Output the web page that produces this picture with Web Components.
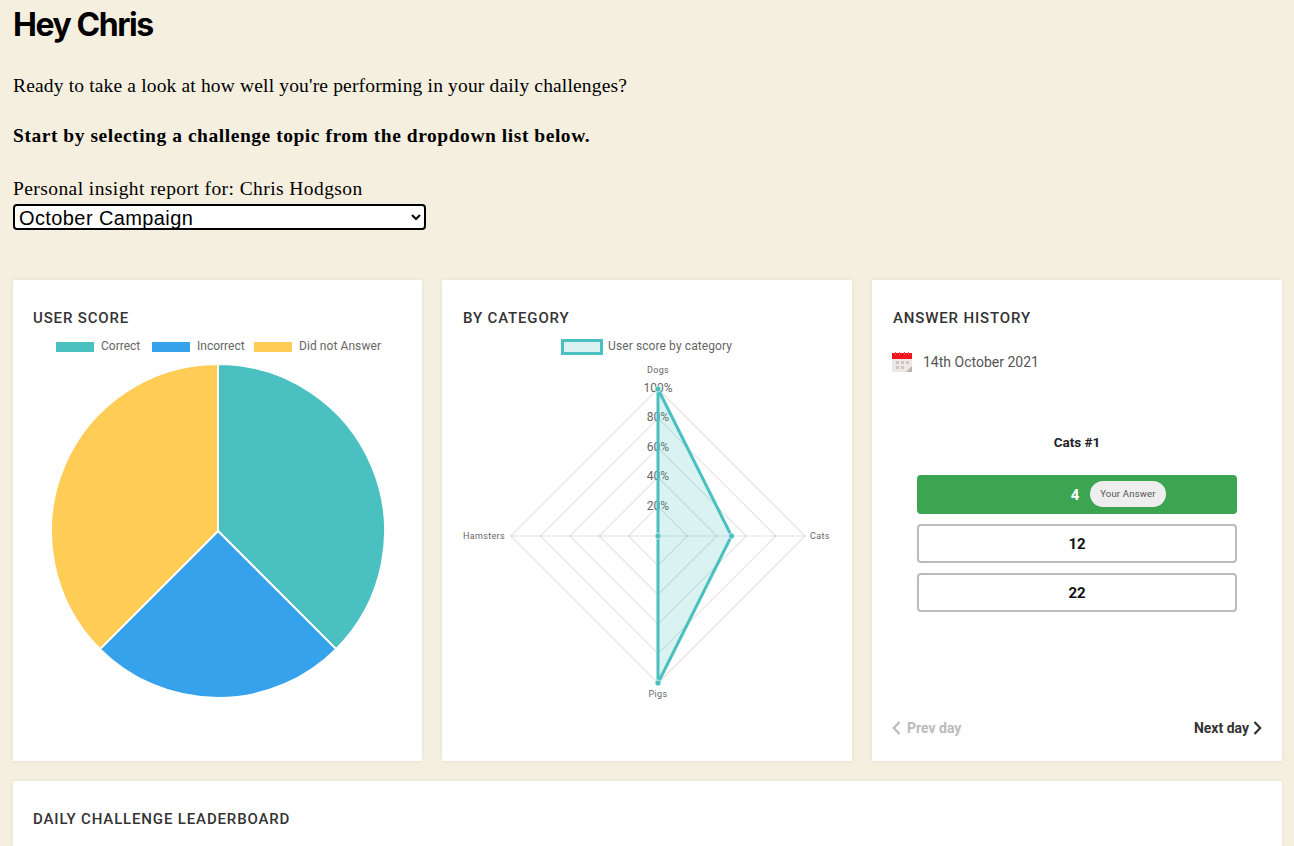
<!DOCTYPE html>
<html>
<head>
<meta charset="utf-8">
<title>Personal insight report</title>
<style>
    html, body {
        margin: 0;
        padding: 0;
        height: 846px;
        overflow: hidden;
        background: #f5efe0;
    }
</style>
</head>
<body>
<insight-page>
    <insight-intro name="Chris" fullname="Chris Hodgson"></insight-intro>
    <insight-grid>
        <insight-card heading="User score"><score-pie></score-pie></insight-card>
        <insight-card heading="By category" style="--title-left: 21px"><category-radar></category-radar></insight-card>
        <insight-card heading="Answer history" style="--title-left: 21px"><answer-history></answer-history></insight-card>
    </insight-grid>
    <insight-card class="wide" heading="Daily challenge leaderboard"></insight-card>
</insight-page>

<script>
class InsightPage extends HTMLElement {
    constructor() {
        super();
        this.attachShadow({mode: 'open'}).innerHTML = `
        <style>
            :host {
                display: flex;
                flex-direction: column;
                gap: 20px;
                padding: 0 12px 0 13px;
            }
            ::slotted(.wide) {
                height: 65px;
            }
        </style>
        <slot></slot>
        `;
    }
}

class InsightIntro extends HTMLElement {
    constructor() {
        super();
        const name = this.getAttribute('name');
        const fullname = this.getAttribute('fullname');
        this.attachShadow({mode: 'open'}).innerHTML = `
        <style>
            :host {
                display: block;
                color: #000;
                font-family: "Liberation Serif", serif;
                font-size: 19.5px;
                height: 260px;
            }
            h1 {
                margin: 0;
                padding-top: 6px;
                font: 700 32px/38px Inter, sans-serif;
                letter-spacing: -1.45px;
            }
            p {
                margin: 0;
                line-height: 23px;
            }
            .ready { margin-top: 30px; letter-spacing: 0.16px; }
            .start { margin-top: 27px; font-weight: bold; letter-spacing: 0.54px; }
            .report { margin-top: 30px; letter-spacing: 0.42px; }
            select {
                display: block;
                box-sizing: border-box;
                width: 413px;
                height: 26px;
                margin-top: 4px;
                padding: 0;
                background: #fff;
                color: #000;
                border: 2px solid #000;
                border-radius: 4px;
                font: 20px "Liberation Sans", sans-serif;
                letter-spacing: 0.4px;
            }
        </style>
        <h1>Hey ${name}</h1>
        <p class="ready">Ready to take a look at how well you're performing in your daily challenges?</p>
        <p class="start">Start by selecting a challenge topic from the dropdown list below.</p>
        <p class="report">Personal insight report for: ${fullname}</p>
        <select><option>October Campaign</option></select>
        `;
    }
}

class InsightGrid extends HTMLElement {
    constructor() {
        super();
        this.attachShadow({mode: 'open'}).innerHTML = `
        <style>
            :host {
                display: grid;
                grid-template-columns: 409px 410px 410px;
                gap: 20px;
                height: 481px;
            }
        </style>
        <slot></slot>
        `;
    }
}

class InsightCard extends HTMLElement {
    constructor() {
        super();
        this.attachShadow({mode: 'open'}).innerHTML = `
        <style>
            :host {
                display: flex;
                flex-direction: column;
                box-sizing: border-box;
                min-width: 0;
                background: #fff;
                box-shadow: 0 0 4px rgba(0, 0, 0, 0.08);
            }
            h2 {
                margin: 0;
                padding: 30px 20px 0 var(--title-left, 20px);
                font: 500 15px/17px Roboto, sans-serif;
                letter-spacing: 0.85px;
                text-transform: uppercase;
                color: #333;
            }
            .body {
                flex: 1;
                display: flex;
                flex-direction: column;
                min-height: 0;
            }
        </style>
        <h2>${this.getAttribute('heading')}</h2>
        <div class="body"><slot></slot></div>
        `;
    }
}

class ScorePie extends HTMLElement {
    constructor() {
        super();
        this.attachShadow({mode: 'open'}).innerHTML = `
        <style>
            :host { display: block; }
            svg { display: block; }
            text { font: 12px Roboto, sans-serif; fill: #666; }
        </style>
        <svg width="409" height="434" viewBox="13 327 409 434">
            <rect x="56" y="342" width="38" height="10" fill="#4bc0c0"/>
            <text x="101" y="350">Correct</text>
            <rect x="152" y="342" width="38" height="10" fill="#36a2eb"/>
            <text x="197" y="350">Incorrect</text>
            <rect x="254" y="342" width="38" height="10" fill="#ffcd56"/>
            <text x="299" y="350" textLength="82">Did not Answer</text>
            <g stroke="#fff" stroke-width="2" stroke-linejoin="round">
                <path d="M218 531 L218 364 A167 167 0 0 1 336.1 649.1 Z" fill="#4bc0c0"/>
                <path d="M218 531 L336.1 649.1 A167 167 0 0 1 99.9 649.1 Z" fill="#36a2eb"/>
                <path d="M218 531 L99.9 649.1 A167 167 0 0 1 218 364 Z" fill="#ffcd56"/>
            </g>
        </svg>
        `;
    }
}

class CategoryRadar extends HTMLElement {
    constructor() {
        super();
        const cx = 658, cy = 536, r = 147;
        let rings = '';
        let ticks = '';
        for (let i = 1; i <= 5; i++) {
            const d = r * i / 5;
            rings += `<polygon points="${cx},${cy - d} ${cx + d},${cy} ${cx},${cy + d} ${cx - d},${cy}"/>`;
            ticks += `<text x="${cx}" y="${cy - d + 3}" text-anchor="middle">${i * 20}%</text>`;
        }
        this.attachShadow({mode: 'open'}).innerHTML = `
        <style>
            :host { display: block; }
            svg { display: block; }
            text { font: 12px Roboto, sans-serif; fill: #666; }
            .label { font-size: 9px; letter-spacing: 0.35px; }
        </style>
        <svg width="410" height="434" viewBox="442 327 410 434">
            <rect x="562.5" y="340.5" width="39" height="13" fill="rgba(75,192,192,0.2)" stroke="#4bc0c0" stroke-width="3"/>
            <text x="608" y="350" textLength="124">User score by category</text>
            <g fill="none" stroke="rgba(0,0,0,0.1)" stroke-width="1.3">${rings}</g>
            <path d="M${cx - r} ${cy} H${cx + r} M${cx} ${cy - r} V${cy + r}" stroke="rgba(0,0,0,0.08)" stroke-width="1.3"/>
            ${ticks}
            <text class="label" x="658" y="373" text-anchor="middle">Dogs</text>
            <text class="label" x="810" y="539">Cats</text>
            <text class="label" x="658" y="697" text-anchor="middle">Pigs</text>
            <text class="label" x="505" y="539" text-anchor="end">Hamsters</text>
            <polygon points="658,389 731.5,536 658,683 658,536" fill="rgba(75,192,192,0.2)" stroke="#4bc0c0" stroke-width="3"/>
            <g fill="#4bc0c0" stroke="rgba(255,255,255,0.6)">
                <circle cx="658" cy="389" r="3"/>
                <circle cx="731.5" cy="536" r="3"/>
                <circle cx="658" cy="683" r="3"/>
                <circle cx="658" cy="536" r="3"/>
            </g>
        </svg>
        `;
    }
}

class AnswerOption extends HTMLElement {
    constructor() {
        super();
        this.attachShadow({mode: 'open'}).innerHTML = `
        <style>
            :host {
                display: flex;
                align-items: center;
                justify-content: center;
                box-sizing: border-box;
                height: 39px;
                border: 2px solid #bbb;
                border-radius: 4px;
                font: 700 15px Roboto, sans-serif;
                color: #111;
            }
            :host([picked]) {
                position: relative;
                padding-right: 4px;
                background: #3ba551;
                border-color: #3ba551;
                color: #fff;
            }
            .pill {
                position: absolute;
                left: 171px;
                top: 4px;
                display: block;
                width: 76px;
                height: 26px;
                border-radius: 13px;
                background: #eee;
                color: #555;
                font: 400 9.5px/26px Roboto, sans-serif;
                letter-spacing: 0.2px;
                text-align: center;
            }
        </style>
        <slot></slot>
        ${this.hasAttribute('picked') ? '<span class="pill">Your Answer</span>' : ''}
        `;
    }
}

class AnswerHistory extends HTMLElement {
    constructor() {
        super();
        this.attachShadow({mode: 'open'}).innerHTML = `
        <style>
            :host {
                flex: 1;
                display: flex;
                flex-direction: column;
                padding: 0 20px 0 20px;
                font-family: Roboto, sans-serif;
            }
            .date {
                display: flex;
                align-items: center;
                gap: 11px;
                margin-top: 25px;
                height: 20px;
                font-size: 14px;
                color: #555;
            }
            .date svg { display: block; }
            .question {
                margin-top: 62px;
                text-align: center;
                font-size: 13.5px;
                line-height: 16px;
                font-weight: 700;
                color: #222;
            }
            .options {
                display: flex;
                flex-direction: column;
                gap: 10px;
                margin: 25px 25px 0;
            }
            .nav {
                display: flex;
                justify-content: space-between;
                margin-top: auto;
                padding-bottom: 24px;
                font-size: 14px;
                font-weight: 700;
                line-height: 18px;
            }
            .nav span {
                display: flex;
                align-items: center;
            }
            .prev { color: #bbb; gap: 6px; }
            .next { color: #333; gap: 4px; }
        </style>
        <div class="date">
            <svg width="20" height="20" viewBox="0 0 20 20">
                <rect y="1" width="20" height="19" fill="#ece8e6"/>
                <rect y="1" width="20" height="6" fill="#f2141c"/>
                <g fill="#d25a5a">
                    <rect x="3" y="0" width="1" height="3"/>
                    <rect x="7" y="0" width="1" height="3"/>
                    <rect x="12" y="0" width="1" height="3"/>
                    <rect x="16" y="0" width="1" height="3"/>
                </g>
                <g fill="#cfc4c1">
                    <rect x="4" y="9" width="3" height="3"/>
                    <rect x="9" y="9" width="3" height="3"/>
                    <rect x="14" y="9" width="3" height="3"/>
                    <rect x="4" y="14" width="3" height="3"/>
                    <rect x="9" y="14" width="3" height="3"/>
                </g>
                <path d="M14 20 L20 14 V20 Z" fill="#bdb4b0"/>
            </svg>
            14th October 2021
        </div>
        <div class="question">Cats #1</div>
        <div class="options">
            <answer-option picked>4</answer-option>
            <answer-option>12</answer-option>
            <answer-option>22</answer-option>
        </div>
        <div class="nav">
            <span class="prev">
                <svg width="9" height="14" viewBox="0 0 9 14" fill="none" stroke="#bbb" stroke-width="2.2"><path d="M7.5 1 L1.8 7 L7.5 13"/></svg>
                Prev day
            </span>
            <span class="next">
                Next day
                <svg width="9" height="14" viewBox="0 0 9 14" fill="none" stroke="#333" stroke-width="2.2"><path d="M1.5 1 L7.2 7 L1.5 13"/></svg>
            </span>
        </div>
        `;
    }
}

customElements.define('insight-page', InsightPage);
customElements.define('insight-intro', InsightIntro);
customElements.define('insight-grid', InsightGrid);
customElements.define('insight-card', InsightCard);
customElements.define('score-pie', ScorePie);
customElements.define('category-radar', CategoryRadar);
customElements.define('answer-option', AnswerOption);
customElements.define('answer-history', AnswerHistory);
</script>
</body>
</html>
